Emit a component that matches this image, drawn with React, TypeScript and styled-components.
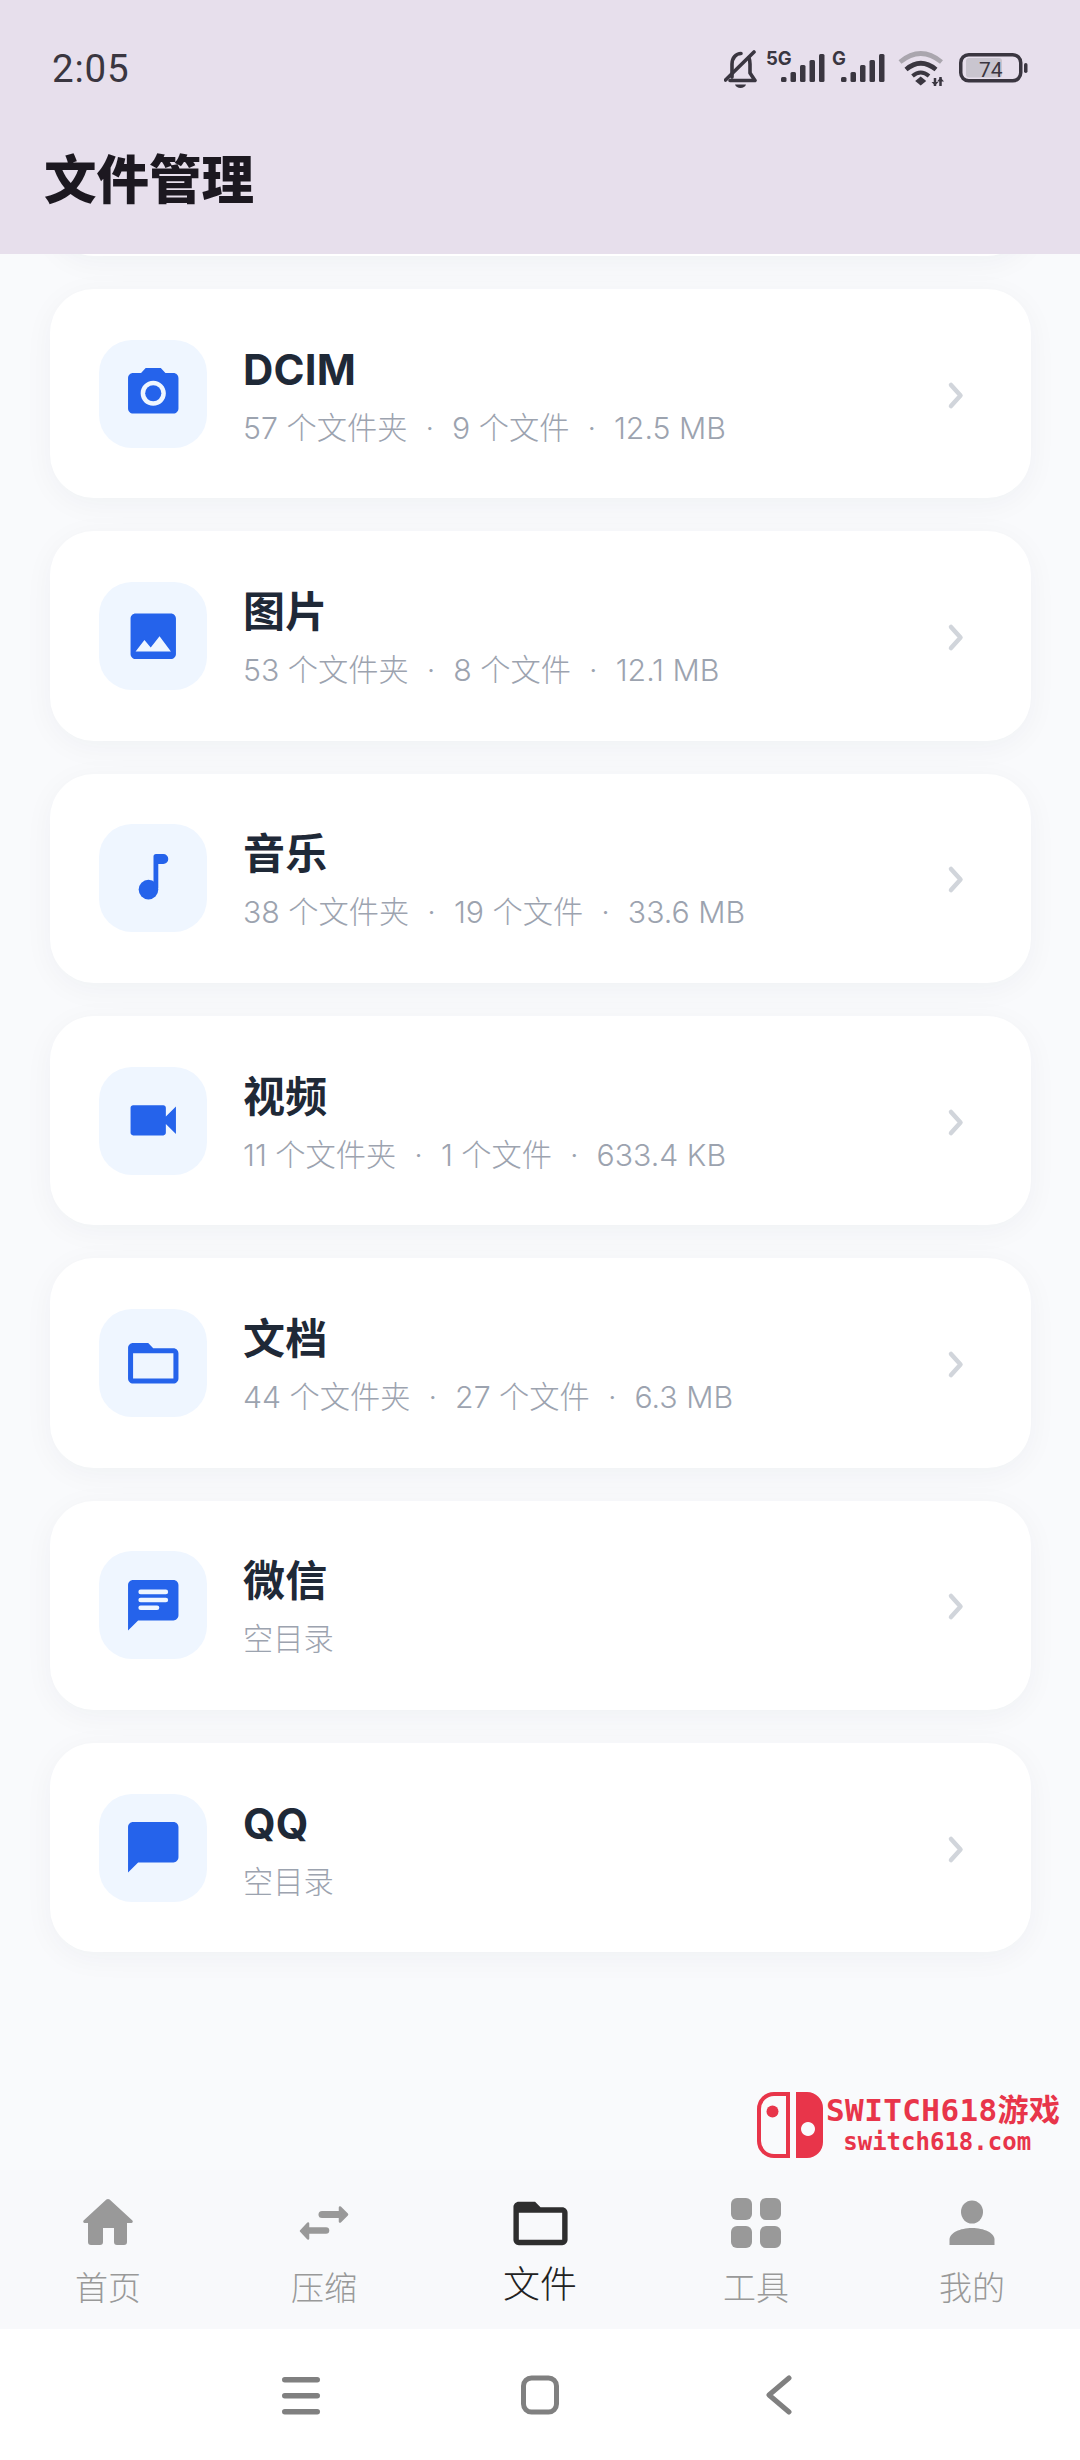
import React from "react";
import styled, { createGlobalStyle } from "styled-components";

const Global = createGlobalStyle`
  html, body { margin: 0; padding: 0; background: #f9fafc; }
  * { box-sizing: border-box; }
`;

const CJK = `"Inter", "Noto Sans CJK SC", sans-serif`;

const Page = styled.div`
  position: relative;
  width: 1080px;
  height: 2460px;
  display: flex;
  flex-direction: column;
  overflow: hidden;
  font-family: ${CJK};
`;

const Header = styled.header`
  height: 254px;
  flex: none;
  background: #e7dfec;
  display: flex;
  flex-direction: column;
  position: relative;
  z-index: 2;
`;

const StatusBar = styled.div`
  height: 89px;
  padding: 49px 51px 0 52px;
  display: flex;
  justify-content: space-between;
  align-items: flex-start;
`;

const Time = styled.span`
  font-family: "Roboto", sans-serif;
  font-size: 38.5px;
  line-height: 40px;
  font-weight: 450;
  letter-spacing: 0.8px;
  color: #3a3640;
`;

const StatusIcons = styled.div`
  display: flex;
  align-items: flex-start;
  height: 40px;
`;

const StatusIcon = styled.svg<{ $gap?: number; $lift?: number }>`
  display: block;
  flex: none;
  margin-left: ${(p) => p.$gap ?? 0}px;
  margin-top: ${(p) => -(p.$lift ?? 0)}px;
  color: #3a3640;
`;

const PageTitle = styled.h1`
  margin: 0;
  padding: 57px 0 0 44px;
  font-family: "Noto Sans CJK SC", sans-serif;
  font-size: 52.5px;
  line-height: 60px;
  font-weight: 900;
  color: #1c1820;
`;

const Main = styled.main`
  flex: 1;
  min-height: 0;
  overflow: hidden;
  display: flex;
  flex-direction: column;
  gap: 33px;
  padding: 0 49.5px;
`;

const Card = styled.div`
  flex: none;
  height: 209.33px;
  padding: 0 49.5px;
  background: #fff;
  border-radius: 44px;
  box-shadow: 0 6px 30px rgba(30, 50, 80, 0.045);
  display: flex;
  align-items: center;
`;

const ScrolledCard = styled(Card)`
  margin-top: -207.33px;
`;

const IconBox = styled.div`
  width: 108px;
  height: 108px;
  flex: none;
  border-radius: 33px;
  background: #eff6ff;
  color: #2563eb;
  display: flex;
  align-items: center;
  justify-content: center;
`;

const Texts = styled.div`
  flex: 1;
  min-width: 0;
  margin-left: 36px;
  padding-top: 4px;
  display: flex;
  flex-direction: column;
`;

const Name = styled.div`
  font-size: 42px;
  line-height: 52px;
  font-weight: 650;
  letter-spacing: 0.2px;
  color: #1f2937;
`;

const Meta = styled.div`
  margin-top: 12px;
  font-size: 30.25px;
  line-height: 40px;
  font-weight: 300;
  color: #9ca3af;
  white-space: nowrap;
`;

const Dot = styled.span`
  margin: 0 18px;
`;

const Chevron = styled.svg`
  flex: none;
  color: #d1d5db;
`;

const BottomNav = styled.nav`
  flex: none;
  height: 159px;
  background: #f8f9fb;
  display: grid;
  grid-template-columns: repeat(5, 1fr);
`;

const NavItem = styled.div`
  padding-top: 23px;
  display: flex;
  flex-direction: column;
  align-items: center;
`;

const NavIconSlot = styled.div<{ $active?: boolean }>`
  height: 60px;
  display: flex;
  align-items: center;
  justify-content: center;
  color: ${(p) => (p.$active ? "#2e2e2e" : "#999999")};
`;

const NavLabel = styled.span<{ $active?: boolean }>`
  margin-top: ${(p) => (p.$active ? 4 : 8)}px;
  font-family: "Noto Sans CJK SC", sans-serif;
  font-size: ${(p) => (p.$active ? 37 : 33)}px;
  line-height: 50px;
  font-weight: 300;
  color: ${(p) => (p.$active ? "#222222" : "#999999")};
`;

const SystemNav = styled.div`
  flex: none;
  height: 131px;
  background: #fff;
  display: flex;
  align-items: center;
  justify-content: center;
  gap: 199px;
  color: #808080;
`;

const Watermark = styled.div`
  position: absolute;
  left: 757px;
  top: 2092px;
  display: flex;
  align-items: flex-start;
  color: #e8354a;
`;

const WatermarkTexts = styled.div`
  margin-left: 3px;
  display: flex;
  flex-direction: column;
  align-items: center;
  font-family: "DejaVu Sans Mono", "Noto Sans CJK SC", monospace;
  font-weight: 700;
`;

const WatermarkTitle = styled.span`
  font-size: 31px;
  line-height: 36px;
  letter-spacing: 0.4px;
  white-space: nowrap;
`;

const WatermarkSite = styled.span`
  margin: 1px 12px 0 0;
  font-size: 24px;
  line-height: 26px;
  white-space: nowrap;
`;

const Mat = ({ size = 60.5, children }: { size?: number; children: React.ReactNode }) => (
  <svg width={size} height={size} viewBox="0 0 24 24" fill="currentColor">
    {children}
  </svg>
);

const CameraIcon = () => (
  <Mat>
    <circle cx="12" cy="12" r="3.2" />
    <path d="M9 2 7.17 4H4c-1.1 0-2 .9-2 2v12c0 1.1.9 2 2 2h16c1.1 0 2-.9 2-2V6c0-1.1-.9-2-2-2h-3.17L15 2H9zm3 15c-2.76 0-5-2.24-5-5s2.24-5 5-5 5 2.24 5 5-2.24 5-5 5z" />
  </Mat>
);
const ImageIcon = () => (
  <Mat>
    <path d="M21 19V5c0-1.1-.9-2-2-2H5c-1.1 0-2 .9-2 2v14c0 1.1.9 2 2 2h14c1.1 0 2-.9 2-2zM8.5 13.5l2.5 3.01L14.5 12l4.5 6H5l3.5-4.5z" />
  </Mat>
);
const MusicIcon = () => (
  <Mat>
    <circle cx="10.1" cy="16.5" r="3.9" />
    <path d="M12.1 16V3.4a1 1 0 0 1 1-1h2.9a1.95 1.95 0 0 1 0 3.9H14V16z" />
  </Mat>
);
const VideoIcon = () => (
  <Mat>
    <path d="M17 10.5V7c0-.55-.45-1-1-1H4c-.55 0-1 .45-1 1v10c0 .55.45 1 1 1h12c.55 0 1-.45 1-1v-3.5l4 4v-11l-4 4z" />
  </Mat>
);
const FolderIcon = ({ size }: { size?: number }) => (
  <Mat size={size}>
    <path d="M20 6h-8l-2-2H4c-1.1 0-1.99.9-1.99 2L2 18c0 1.1.9 2 2 2h16c1.1 0 2-.9 2-2V8c0-1.1-.9-2-2-2zm0 12H4V8h16v10z" />
  </Mat>
);
const ChatLinesIcon = () => (
  <Mat>
    <path d="M20 2H4c-1.1 0-2 .9-2 2v18l4-4h14c1.1 0 2-.9 2-2V4c0-1.1-.9-2-2-2z" />
    <g stroke="#eff6ff" strokeWidth="1.8" strokeLinecap="round">
      <line x1="7" y1="6.7" x2="17" y2="6.7" />
      <line x1="7" y1="9.9" x2="17" y2="9.9" />
      <line x1="7" y1="13" x2="13.5" y2="13" />
    </g>
  </Mat>
);
const ChatIcon = () => (
  <Mat>
    <path d="M20 2H4c-1.1 0-2 .9-2 2v18l4-4h14c1.1 0 2-.9 2-2V4c0-1.1-.9-2-2-2z" />
  </Mat>
);

const HomeIcon = () => (
  <svg width="60" height="60" viewBox="0 0 60 60" fill="currentColor">
    <path d="M28.4 6.6a2.4 2.4 0 0 1 3.2 0L54.4 27.4c.8.8.3 2.6-1 2.6H49v19a3 3 0 0 1-3 3H39a3 3 0 0 1-3-3V35H25v14a3 3 0 0 1-3 3H13a3 3 0 0 1-3-3V30H6.6c-1.3 0-1.8-1.8-1-2.6z" />
  </svg>
);
const SwapIcon = () => (
  <svg width="60" height="60" viewBox="0 0 60 60" fill="currentColor" stroke="currentColor" strokeLinecap="round" strokeLinejoin="round">
    <line x1="28" y1="21.5" x2="48" y2="21.5" strokeWidth="7" />
    <path d="M46 14.5 53 21.5 46 28.5z" strokeWidth="2.5" />
    <line x1="32" y1="37.5" x2="12" y2="37.5" strokeWidth="6.5" />
    <path d="M14 30.5 7 38 14 45.5z" strokeWidth="2.5" />
  </svg>
);
const AppsIcon = () => (
  <svg width="60" height="60" viewBox="0 0 60 60" fill="currentColor">
    <rect x="5" y="5" width="21" height="22" rx="6" />
    <rect x="34" y="5" width="21" height="22" rx="6" />
    <rect x="5" y="33" width="21" height="22" rx="6" />
    <rect x="34" y="33" width="21" height="22" rx="6" />
  </svg>
);
const PersonIcon = () => (
  <svg width="60" height="60" viewBox="0 0 60 60" fill="currentColor">
    <ellipse cx="30" cy="19" rx="11" ry="11.5" />
    <path d="M7.500 52V46.500C7.500 40 18 35 30 35s22.500 5 22.500 11.500V52z" />
  </svg>
);

const items: { name: string; meta: string[]; icon: React.ReactNode }[] = [
  { name: "DCIM", meta: ["57 个文件夹", "9 个文件", "12.5 MB"], icon: <CameraIcon /> },
  { name: "图片", meta: ["53 个文件夹", "8 个文件", "12.1 MB"], icon: <ImageIcon /> },
  { name: "音乐", meta: ["38 个文件夹", "19 个文件", "33.6 MB"], icon: <MusicIcon /> },
  { name: "视频", meta: ["11 个文件夹", "1 个文件", "633.4 KB"], icon: <VideoIcon /> },
  { name: "文档", meta: ["44 个文件夹", "27 个文件", "6.3 MB"], icon: <FolderIcon /> },
  { name: "微信", meta: ["空目录"], icon: <ChatLinesIcon /> },
  { name: "QQ", meta: ["空目录"], icon: <ChatIcon /> },
];

const tabs: { label: string; icon: React.ReactNode; active?: boolean }[] = [
  { label: "首页", icon: <HomeIcon /> },
  { label: "压缩", icon: <SwapIcon /> },
  { label: "文件", icon: <FolderIcon size={65} />, active: true },
  { label: "工具", icon: <AppsIcon /> },
  { label: "我的", icon: <PersonIcon /> },
];

const Bars = ({ xs }: { xs: number[] }) => {
  const heights = [5, 10, 17, 22, 28];
  return (
    <g fill="currentColor">
      {xs.map((x, i) => (
        <rect key={x} x={x} y={33 - heights[i]} width="5.5" height={heights[i]} rx="1.5" />
      ))}
    </g>
  );
};

export default function App() {
  return (
    <Page>
      <Global />
      <Header>
        <StatusBar>
          <Time>2:05</Time>
          <StatusIcons>
            <StatusIcon width="33" height="40" viewBox="0 0 33 40" fill="none" stroke="currentColor">
              <path d="M8 28V15C8 9 12 4.500 17 4.500M25 9c.7 1.800 1 3.800 1 6v9l5 7.500H6" strokeWidth="3.600" strokeLinecap="round" strokeLinejoin="round" />
              <path d="M1.500 31 30 3" strokeWidth="3.600" strokeLinecap="round" />
              <path d="M11 35.500h11c-.6 2-2.900 3.500-5.500 3.500S11.600 37.500 11 35.500z" fill="currentColor" stroke="none" />
            </StatusIcon>
            <StatusIcon $gap={9} $lift={6} width="59" height="46" viewBox="0 -6 59 46">
              <text x="0" y="16" fontFamily="Inter, sans-serif" fontSize="18.500" fontWeight="700" fill="currentColor">5G</text>
              <Bars xs={[15, 24.5, 34, 43.5, 53]} />
            </StatusIcon>
            <StatusIcon $gap={7} $lift={6} width="53" height="46" viewBox="0 -6 53 46">
              <text x="0" y="16" fontFamily="Inter, sans-serif" fontSize="18.500" fontWeight="700" fill="currentColor">G</text>
              <Bars xs={[9, 18.5, 28, 37.5, 47]} />
            </StatusIcon>
            <StatusIcon $gap={13} width="46" height="40" viewBox="0 0 46 40" fill="none" stroke="currentColor" strokeWidth="4.600">
              <path d="M2 13Q22.700-4 43.500 13" stroke="#aaa6ae" />
              <path d="M8 20.500Q22.700 8 38 20.500" />
              <path d="M14.500 27Q22.700 20 31 27" strokeWidth="4" />
              <path d="M22.700 27.500l5.500 4.500-5.500 4.500-5.500-4.500z" fill="currentColor" stroke="none" />
              <path d="M37 29v8M42.500 28v9" strokeWidth="2.500" />
              <path d="M33.500 33h7l-3.500 3.500zM39 32.500h7l-3.500-4z" fill="currentColor" stroke="none" />
            </StatusIcon>
            <StatusIcon $gap={15} width="70" height="40" viewBox="0 0 70 40">
              <rect x="1.750" y="5.750" width="60" height="26" rx="8" fill="none" stroke="currentColor" strokeWidth="3.500" />
              <rect x="7" y="9" width="36" height="19.500" rx="3" fill="#c9c5cf" />
              <text x="20" y="28" fontFamily="Roboto, sans-serif" fontSize="21" fontWeight="400" fill="currentColor">74</text>
              <rect x="65" y="14" width="3.500" height="10" rx="1.750" fill="currentColor" />
            </StatusIcon>
          </StatusIcons>
        </StatusBar>
        <PageTitle>文件管理</PageTitle>
      </Header>
      <Main>
        <ScrolledCard aria-hidden="true" />
        {items.map((item) => (
          <Card key={item.name}>
            <IconBox>{item.icon}</IconBox>
            <Texts>
              <Name>{item.name}</Name>
              <Meta>
                {item.meta.map((m, i) => (
                  <React.Fragment key={m}>
                    {i > 0 && <Dot>·</Dot>}
                    {m}
                  </React.Fragment>
                ))}
              </Meta>
            </Texts>
            <Chevron width="40" height="40" viewBox="0 0 40 40" fill="none" stroke="currentColor" strokeWidth="4.500" strokeLinecap="round" strokeLinejoin="round">
              <path d="M10 11l9.500 10.500L10 32" />
            </Chevron>
          </Card>
        ))}
      </Main>
      <BottomNav>
        {tabs.map((t) => (
          <NavItem key={t.label}>
            <NavIconSlot $active={t.active}>{t.icon}</NavIconSlot>
            <NavLabel $active={t.active}>{t.label}</NavLabel>
          </NavItem>
        ))}
      </BottomNav>
      <SystemNav>
        <svg width="40" height="40" viewBox="0 0 40 40" fill="currentColor">
          <rect x="1" y="2" width="38" height="5.500" rx="2.750" />
          <rect x="1" y="18" width="38" height="5.500" rx="2.750" />
          <rect x="1" y="34" width="38" height="5.500" rx="2.750" />
        </svg>
        <svg width="40" height="40" viewBox="0 0 40 40" fill="none" stroke="currentColor" strokeWidth="5">
          <rect x="3.500" y="3" width="33" height="34" rx="8" />
        </svg>
        <svg width="40" height="40" viewBox="0 0 40 40" fill="none" stroke="currentColor" strokeWidth="5" strokeLinecap="round" strokeLinejoin="round">
          <path d="M30 3 10 20l20 17" />
        </svg>
      </SystemNav>
      <Watermark>
        <svg width="66" height="66" viewBox="0 0 66 66" fill="currentColor">
          <path d="M31 2H17A15 15 0 0 0 2 17V49A15 15 0 0 0 17 64H31Z" fill="none" stroke="currentColor" strokeWidth="4" />
          <circle cx="15.500" cy="19.500" r="6" />
          <path fillRule="evenodd" d="M39 0H50A16 16 0 0 1 66 16V50A16 16 0 0 1 50 66H39ZM51 30a7 7 0 1 0 .01 0Z" />
        </svg>
        <WatermarkTexts>
          <WatermarkTitle>SWITCH618游戏</WatermarkTitle>
          <WatermarkSite>switch618.com</WatermarkSite>
        </WatermarkTexts>
      </Watermark>
    </Page>
  );
}
